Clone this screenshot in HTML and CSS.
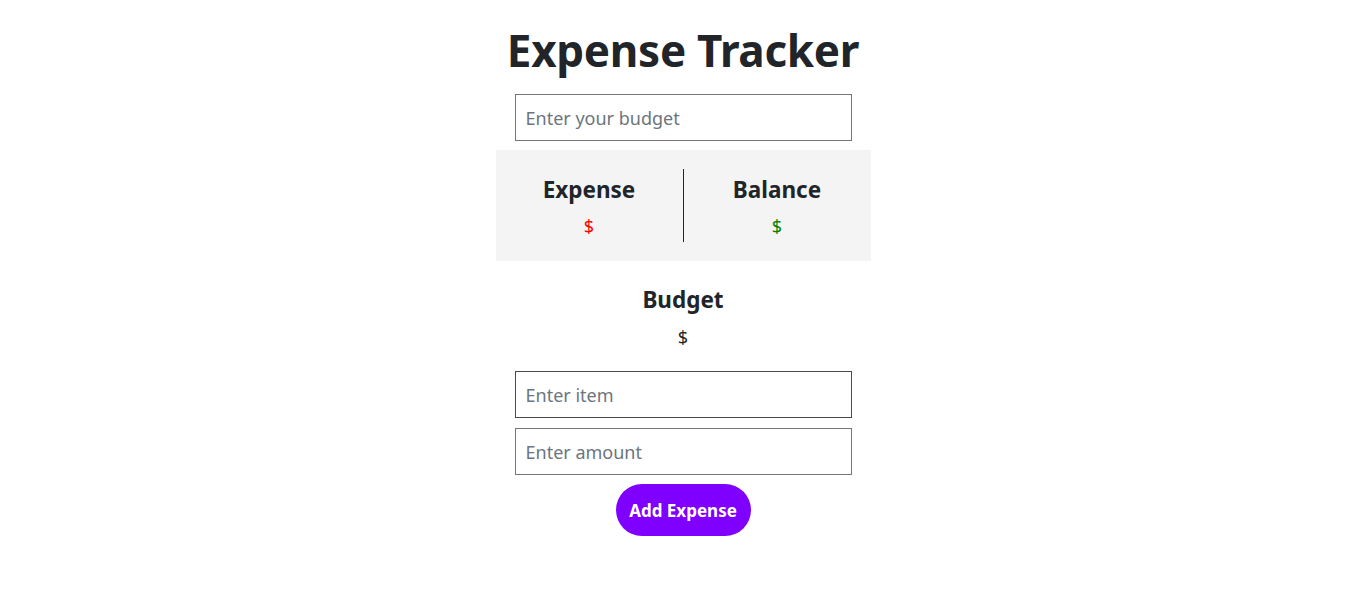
FILE: index.html
```html
<!DOCTYPE html>
<html lang="en">
<head>
<meta charset="utf-8">
<title>Expense Tracker</title>
<link rel="stylesheet" href="styles.css">
</head>
<body>
<main class="app">
  <h1 class="title">Expense Tracker</h1>
  <input class="field" type="text" placeholder="Enter your budget">
  <section class="stats">
    <div class="stat">
      <h2 class="stat-label">Expense</h2>
      <p class="stat-value expense">$</p>
    </div>
    <div class="divider"></div>
    <div class="stat">
      <h2 class="stat-label">Balance</h2>
      <p class="stat-value balance">$</p>
    </div>
  </section>
  <section class="budget">
    <h2 class="stat-label">Budget</h2>
    <p class="stat-value budget-value">$</p>
  </section>
  <input class="field field-dark" type="text" placeholder="Enter item">
  <input class="field field-second" type="text" placeholder="Enter amount">
  <button class="add-btn" type="button">Add Expense</button>
</main>
</body>
</html>
```
FILE: styles.css
```css
* { box-sizing: border-box; }
html, body { margin: 0; padding: 0; background: #fff; }
body {
  font-family: "Noto Sans", "Open Sans", sans-serif;
  color: #212529;
}
.app {
  width: 375px;
  margin: 0 auto;
  display: flex;
  flex-direction: column;
  align-items: center;
  padding-top: 20px;
}
.title {
  margin: 0;
  font-size: 44px;
  font-weight: 700;
  line-height: 60px;
  letter-spacing: -0.3px;
}
.field {
  width: 337px;
  height: 47px;
  margin-top: 14px;
  border: 1px solid #767676;
  border-radius: 0;
  padding: 0 10px;
  font-family: inherit;
  font-size: 18px;
  color: #212529;
  background: #fff;
  outline: none;
}
.field::placeholder { color: #6c757d; }
.field-dark { margin-top: 22px; border-color: #4a4a4a; }
.field-second { margin-top: 10px; }
.stats {
  margin-top: 9px;
  width: 375px;
  height: 111px;
  background: #f4f4f4;
  display: flex;
  align-items: center;
  padding: 19px 0;
}
.stat {
  flex: 1;
  display: flex;
  flex-direction: column;
  align-items: center;
}
.divider {
  width: 1px;
  align-self: stretch;
  background: #212529;
}
.stat-label {
  margin: 0;
  padding-top: 2px;
  font-size: 22.5px;
  font-weight: 700;
  line-height: 30px;
}
.stat-value {
  margin: 9px 0 0;
  font-size: 18px;
  line-height: 24px;
}
.budget-value { margin-top: 10px; }
.expense { color: #ff0000; }
.balance { color: #008000; }
.budget {
  margin-top: 22px;
  display: flex;
  flex-direction: column;
  align-items: center;
}
.add-btn {
  margin-top: 9px;
  width: 135px;
  height: 52px;
  border: none;
  border-radius: 26px;
  background: #8000ff;
  color: #fff;
  font-family: inherit;
  font-size: 17px;
  font-weight: 700;
  cursor: pointer;
}
```
